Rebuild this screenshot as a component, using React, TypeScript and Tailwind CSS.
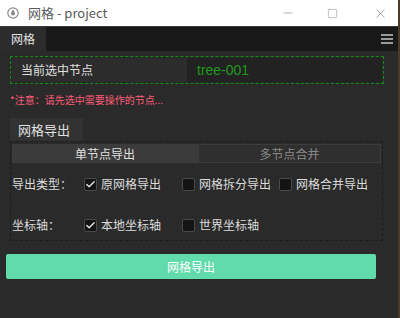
import { Minus, Square, X, Check } from "lucide-react";

const font = { fontFamily: '"Microsoft YaHei", "Noto Sans CJK SC", "Noto Sans", sans-serif' };

function Box({ checked, label }: { checked?: boolean; label: string }) {
  return (
    <div className="flex items-center gap-[4px]">
      <div className="w-[13px] h-[13px] rounded-[2px] border border-[#4a4a4a] bg-[#141414] flex items-center justify-center">
        {checked && <Check size={11} strokeWidth={3} className="text-[#e6e6e6]" />}
      </div>
      <span className="text-[12px] text-[#dcdcdc]">{label}</span>
    </div>
  );
}

export default function App() {
  return (
    <div className="w-[400px] h-[318px] flex bg-[#2a2a2a]" style={font}>
      <div className="w-[398px] flex flex-col">
        {/* title bar */}
        <div className="h-[27px] bg-white flex items-center border-b border-[#3a3a3a]">
          <svg width="12" height="12" viewBox="0 0 12 12" className="ml-[7px]">
            <circle cx="6" cy="6" r="5.2" fill="none" stroke="#8a8a8a" strokeWidth="1.2" />
            <path d="M6 2.6 C4.6 4.6 4 5.6 4 6.6 A2 2 0 0 0 8 6.6 C8 5.6 7.4 4.6 6 2.6 Z" fill="#8a8a8a" />
          </svg>
          <span className="ml-[9px] text-[13px] text-[#5a5a5a]">网格 - project</span>
          <div className="ml-auto flex items-center">
            <Minus size={14} strokeWidth={1} className="text-[#777] mr-[32px]" />
            <Square size={11} strokeWidth={1} className="text-[#777] mr-[35px]" />
            <X size={15} strokeWidth={1} className="text-[#777] mr-[10px]" />
          </div>
        </div>
        {/* tab bar */}
        <div className="h-[24px] bg-[#191919] flex items-stretch">
          <div className="w-[46px] bg-[#2c2c2c] flex items-center justify-center text-[12px] text-[#e0e0e0]">网格</div>
          <div className="ml-auto mr-[5px] flex flex-col justify-center gap-[2px]">
            <div className="w-[12px] h-[2px] bg-[#9a9a9a]" />
            <div className="w-[12px] h-[2px] bg-[#9a9a9a]" />
            <div className="w-[12px] h-[2px] bg-[#9a9a9a]" />
          </div>
        </div>
        {/* content */}
        <div className="flex-1 bg-[#2a2a2a] flex flex-col">
          <div className="mt-[5px] ml-[10px] w-[374px] h-[28px] border border-dashed border-[#148a14] flex p-[1px]">
            <div className="w-[175px] flex items-center pl-[9px] text-[12px] text-[#e0e0e0] bg-[#2c2c2c]">当前选中节点</div>
            <div className="flex-1 bg-[#222] flex items-center pl-[10px] text-[14px] text-[#1f9a1f]" style={{ fontFamily: '"Liberation Sans", Arial, sans-serif' }}>tree-001</div>
          </div>
          <div className="ml-[10px] mt-[8px] text-[10px] text-[#ff5d78]">*注意：请先选中需要操作的节点...</div>
          <div className="ml-[10px] mt-[11px] w-[73px] h-[23px] bg-[#323232] flex items-center pl-[8px] text-[13px] text-[#e0e0e0]">网格导出</div>
          <div className="ml-[10px] w-[373px] h-[100px] border border-dashed border-[#1c1c1c] flex flex-col px-[1px] pt-[2px]">
            <div className="flex h-[19px] text-[12px]">
              <div className="w-[186px] bg-[#3b3b3b] flex items-center justify-center text-[#e0e0e0]">单节点导出</div>
              <div className="flex-1 bg-[#2f2f2f] border border-[#3c3c3c] flex items-center justify-center text-[#8a8a8a]">多节点合并</div>
            </div>
            <div className="flex items-center mt-[13px] h-[16px]">
              <span className="w-[72px] text-[12px] text-[#dcdcdc]">导出类型：</span>
              <div className="w-[98px]"><Box checked label="原网格导出" /></div>
              <div className="w-[97px]"><Box label="网格拆分导出" /></div>
              <Box label="网格合并导出" />
            </div>
            <div className="flex items-center mt-[25px] h-[16px]">
              <span className="w-[72px] text-[12px] text-[#dcdcdc]">坐标轴：</span>
              <div className="w-[98px]"><Box checked label="本地坐标轴" /></div>
              <Box label="世界坐标轴" />
            </div>
          </div>
          <div className="ml-[6px] mt-[13px] w-[370px] h-[25px] rounded-[2px] bg-[#62dbac] flex items-center justify-center text-[12px] text-white">网格导出</div>
        </div>
      </div>
      <div className="w-[2px] bg-[#4a3c2c]" />
    </div>
  );
}
